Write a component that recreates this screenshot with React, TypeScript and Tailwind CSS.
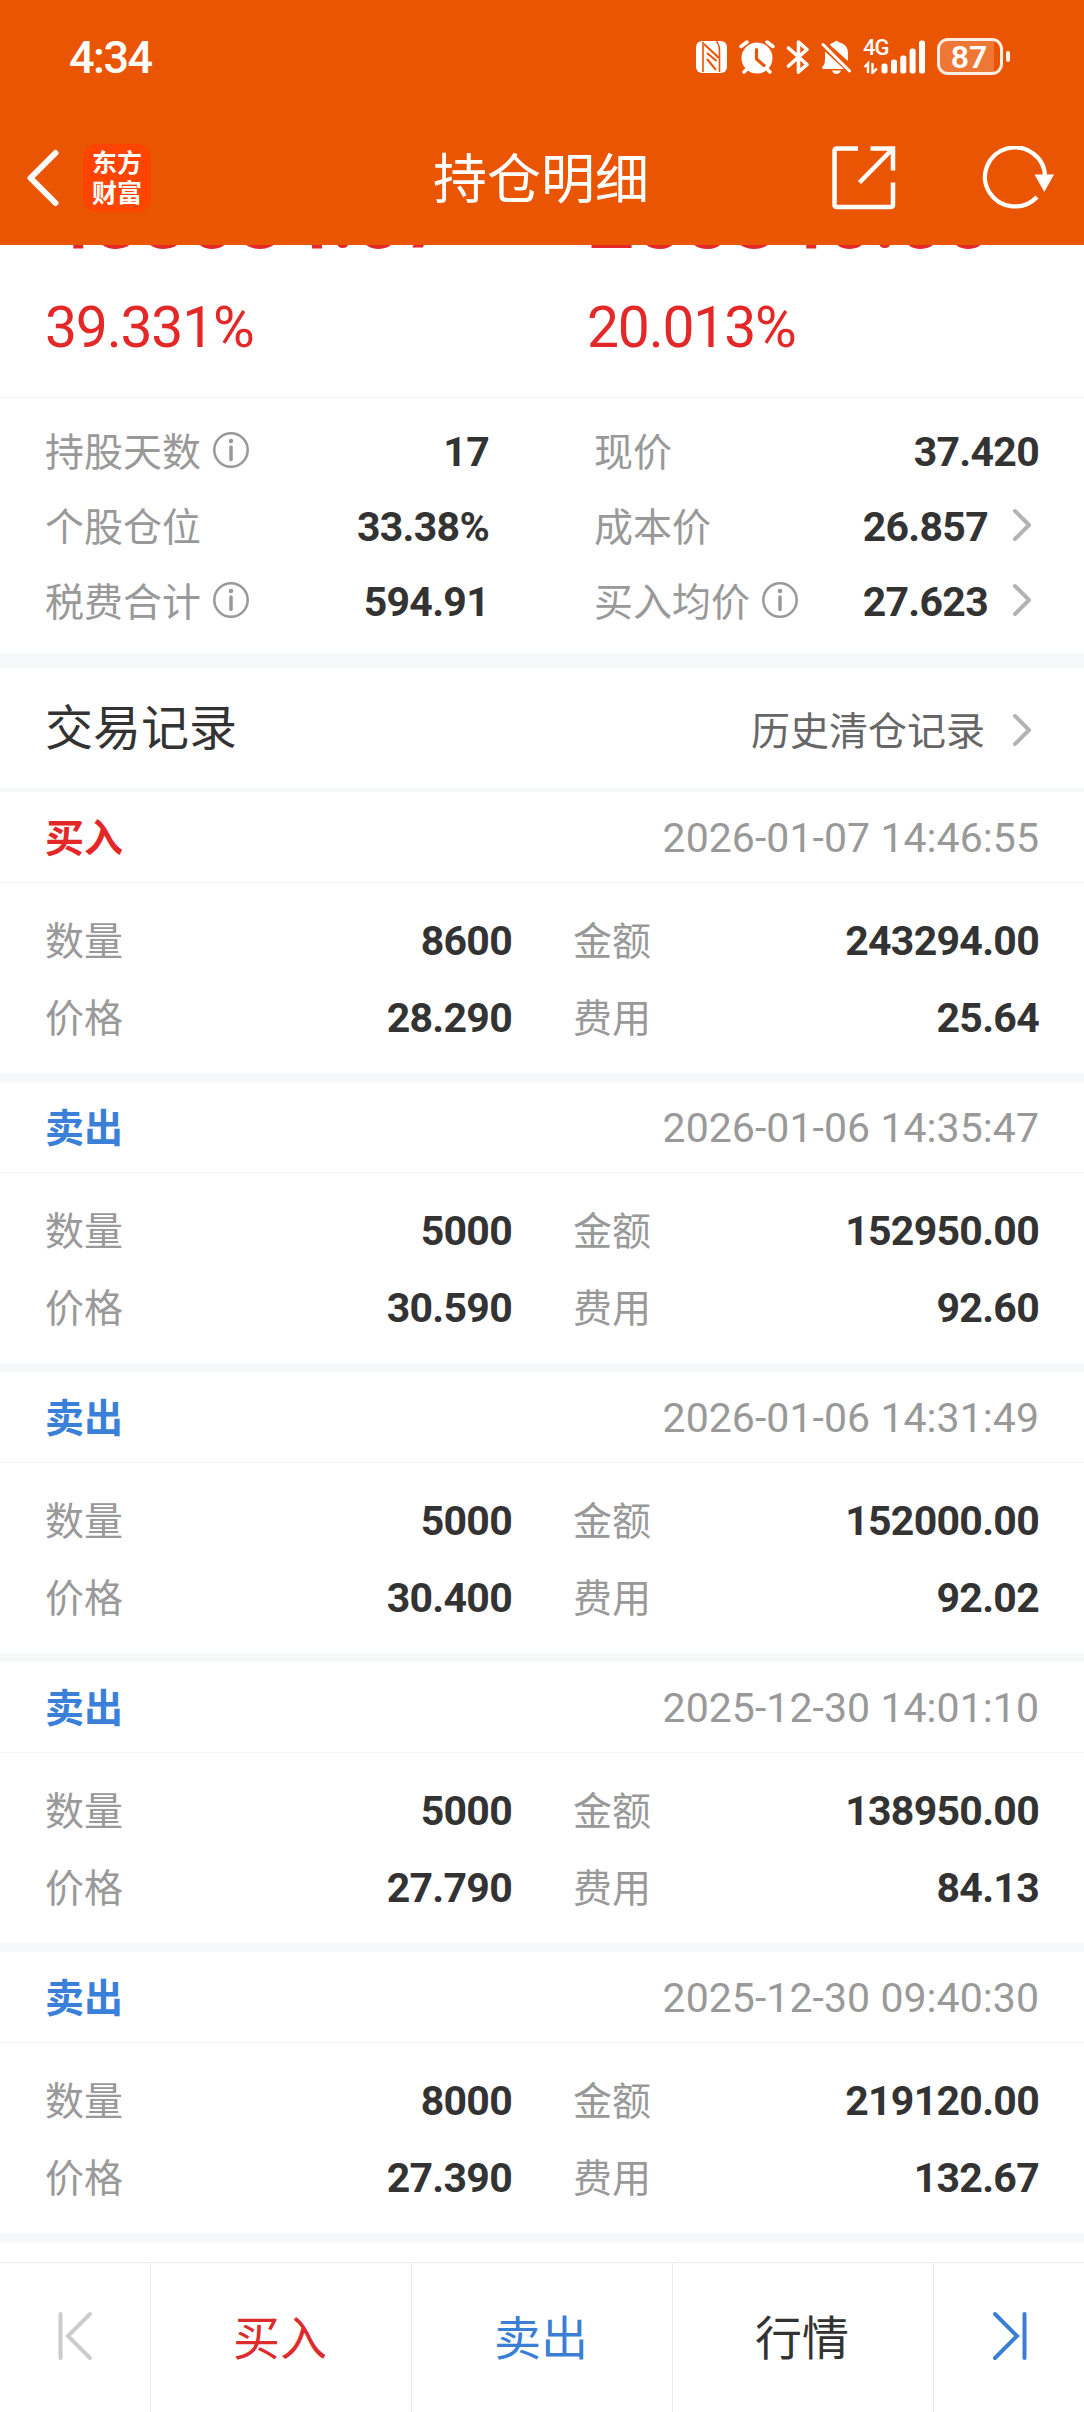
import React from "react";
import { clsx } from "clsx";

interface TradeRecord {
  side: "buy" | "sell";
  time: string;
  quantity: string;
  amount: string;
  price: string;
  fee: string;
}

const records: TradeRecord[] = [
  { side: "buy", time: "2026-01-07 14:46:55", quantity: "8600", amount: "243294.00", price: "28.290", fee: "25.64" },
  { side: "sell", time: "2026-01-06 14:35:47", quantity: "5000", amount: "152950.00", price: "30.590", fee: "92.60" },
  { side: "sell", time: "2026-01-06 14:31:49", quantity: "5000", amount: "152000.00", price: "30.400", fee: "92.02" },
  { side: "sell", time: "2025-12-30 14:01:10", quantity: "5000", amount: "138950.00", price: "27.790", fee: "84.13" },
  { side: "sell", time: "2025-12-30 09:40:30", quantity: "8000", amount: "219120.00", price: "27.390", fee: "132.67" },
];

function StatusBar() {
  return (
    <div className="flex h-[113px] items-center justify-between pl-[69px] pr-[74px] text-white">
      <span className="pt-0.5 font-['Roboto'] text-[45px] font-medium leading-none tracking-[-1.5px]">4:34</span>
      <div className="flex items-center">
        {/* NFC */}
        <svg className="mr-3 h-8 w-[31px]" viewBox="0 0 31 32" fill="none">
          <rect width="31" height="32" rx="6" fill="white" />
          <path d="M7 1V31M20.500 0Q23.500 4 23.500 10V31" stroke="#ea5504" strokeWidth="1.6" />
          <path d="M8 3L23 17M11 12L20.500 20M11 18L20 29" stroke="#ea5504" strokeWidth="2" />
        </svg>
        {/* alarm */}
        <svg className="mr-[11px] h-[34px] w-9" viewBox="0 0 36 34" fill="none">
          <circle cx="18" cy="18" r="15.500" fill="white" />
          <path d="M2 6.500L8 2M34 6.500L28 2M8 29L5 32M28 29L31 32" stroke="white" strokeWidth="3.500" strokeLinecap="round" />
          <path d="M17.500 9.500V19L25 25.500" stroke="#ea5504" strokeWidth="3.200" strokeLinecap="round" />
        </svg>
        {/* bluetooth */}
        <svg className="mr-[11px] h-[34px] w-6" viewBox="0 0 24 34" fill="none">
          <path d="M2.500 8L21 24.500L12.500 32V2L21 9.500L2.500 26" stroke="white" strokeWidth="3.600" strokeLinecap="round" strokeLinejoin="round" />
        </svg>
        {/* muted bell */}
        <svg className="mr-3 h-[34px] w-[30px]" viewBox="0 0 30 34" fill="none">
          <path d="M9 4.500Q11 2.500 13 2.300Q15.500 -1 18 2.300Q27 4.500 27 13V21L9 5Z" fill="white" />
          <path d="M4 11.500L23 29H2Q0 27 3 25Q4 23 4 18Z" fill="white" />
          <path d="M11 30.500H20Q18.500 34 15.500 34Q12.500 34 11 30.500Z" fill="white" />
          <path d="M2 4.500L28.500 31" stroke="white" strokeWidth="3" strokeLinecap="round" />
        </svg>
        {/* signal */}
        <div className="relative mr-3 h-[34px] w-[62px]">
          <span className="absolute -top-px left-0 font-['Roboto'] text-[22px] font-medium leading-[17px] tracking-[-1px]">4G</span>
          <svg className="h-full w-full" viewBox="0 0 62 34" fill="white">
            <rect x="18.500" y="23.500" width="6" height="10" rx="2.500" />
            <rect x="28" y="19.500" width="6" height="14" rx="2.500" />
            <rect x="37.300" y="15.500" width="6" height="18" rx="2.500" />
            <rect x="46.600" y="8.500" width="6" height="25" rx="2.500" />
            <rect x="56" y="0.500" width="6" height="33" rx="2.500" />
            <path d="M1.500 27L5 23.500V33M9.500 23V33L14 28.500" stroke="white" strokeWidth="2.400" fill="none" />
          </svg>
        </div>
        {/* battery */}
        <div className="flex items-center">
          <div className="relative flex h-[37px] w-[66px] items-center justify-center rounded-[11px] border-[3px] border-white/90">
            <div className="absolute inset-y-0 left-0 w-[54px] rounded-l-[8px] bg-white/20" />
            <span className="relative right-px font-['Roboto'] text-[32px] font-semibold leading-none">87</span>
          </div>
          <div className="ml-[3px] h-[11px] w-1 rounded-[2px] bg-white/90" />
        </div>
      </div>
    </div>
  );
}

function TitleBar() {
  return (
    <div className="flex h-[132px] items-center pb-[3px] pl-[26px] pr-[28px] text-white">
      <div className="flex flex-1 items-center">
        <svg className="h-[58px] w-[34px]" viewBox="0 0 34 58" fill="none">
          <path d="M29.500 4L4.500 29L29.500 54" stroke="white" strokeWidth="6" strokeLinecap="round" strokeLinejoin="round" />
        </svg>
        <div className="ml-[23px] flex h-[68px] w-[68px] items-center justify-center rounded-[14px] bg-[#ff4400]">
          <span className="w-[50px] break-all pb-1 text-[25px] font-bold leading-[30px]">东方财富</span>
        </div>
      </div>
      <h1 className="pb-[3px] text-[54px] leading-none">持仓明细</h1>
      <div className="flex flex-1 items-center justify-end">
        <svg className="mr-[86px] h-16 w-16" viewBox="0 0 64 64" fill="none" stroke="white" strokeWidth="4.500">
          <path d="M26 2.500H5Q2.500 2.500 2.500 5V58.500Q2.500 61 5 61H58.500Q61 61 61 58.500V36.500" />
          <path d="M38.500 2.500H61V24.500M60 3.500L27.500 36.500" />
        </svg>
        <svg className="h-16 w-[74px]" viewBox="0 0 74 64" fill="none">
          <path d="M63 31A30 29.500 0 1 0 55 51" stroke="white" strokeWidth="4.200" />
          <path d="M52.500 28.500H72L62.300 46Z" fill="white" />
        </svg>
      </div>
    </div>
  );
}

function InfoIcon() {
  return (
    <svg className="mb-[3px] ml-3 h-9 w-9" viewBox="0 0 36 36" fill="none">
      <circle cx="18" cy="18" r="16.700" stroke="#999999" strokeWidth="2.500" />
      <circle cx="18" cy="9" r="2.300" fill="#999999" />
      <path d="M18 15V27.500" stroke="#999999" strokeWidth="3.500" strokeLinecap="round" />
    </svg>
  );
}

function ChevronIcon({ className }: { className?: string }) {
  return (
    <svg className={clsx("h-[34px] w-5", className)} viewBox="0 0 20 34" fill="none">
      <path d="M3 3L17 17L3 31" stroke="#b3b3b3" strokeWidth="4" strokeLinecap="round" strokeLinejoin="round" />
    </svg>
  );
}

function FieldLabel({ children }: { children: React.ReactNode }) {
  return <span className="pb-[5px] text-[39px] leading-none text-[#999999]">{children}</span>;
}

function FieldValue({ children }: { children: React.ReactNode }) {
  return (
    <span className="-mr-px ml-auto pt-px font-['Roboto'] text-[41px] font-bold leading-none tracking-[-0.7px] text-[#333333]">
      {children}
    </span>
  );
}

interface StatRowProps {
  label: string;
  value: string;
  info?: boolean;
  link?: boolean;
}

function StatRow({ label, value, info, link }: StatRowProps) {
  return (
    <div className="flex h-[75px] items-center">
      <FieldLabel>{label}</FieldLabel>
      {info && <InfoIcon />}
      <FieldValue>{value}</FieldValue>
      {link && <ChevronIcon className="mb-[3px] ml-[25px] mr-[6px]" />}
    </div>
  );
}

function RecordField({ label, value }: { label: string; value: string }) {
  return (
    <div className="flex h-[77px] items-center">
      <FieldLabel>{label}</FieldLabel>
      <FieldValue>{value}</FieldValue>
    </div>
  );
}

function RecordCard({ record }: { record: TradeRecord }) {
  const isBuy = record.side === "buy";
  return (
    <div className="h-[290px] border-b-[9px] border-[#f7f8fa]">
      <div className="flex h-[91px] items-center justify-between border-b border-[#f5f5f5] pl-[45px] pr-[45px]">
        <span className={clsx("pb-[3px] text-[39px] font-bold leading-none", isBuy ? "text-[#e42828]" : "text-[#3a80d9]")}>
          {isBuy ? "买入" : "卖出"}
        </span>
        <span className="pt-0.5 font-['Roboto'] text-[41px] leading-none tracking-[0.06px] text-[#999999]">{record.time}</span>
      </div>
      <div className="grid grid-cols-[466px_465px] gap-x-[62px] pl-[45px] pt-[19px]">
        <RecordField label="数量" value={record.quantity} />
        <RecordField label="金额" value={record.amount} />
        <RecordField label="价格" value={record.price} />
        <RecordField label="费用" value={record.fee} />
      </div>
    </div>
  );
}

function BottomBar() {
  return (
    <nav className="grid h-[150px] grid-cols-[151px_261px_261px_261px_150px] divide-x divide-[#ebebeb] border-t border-[#ebebeb] bg-white text-[47px] leading-none">
      <button className="flex items-center justify-center pb-1">
        <svg className="h-[50px] w-[36px]" viewBox="0 0 36 50" fill="none" stroke="#cccccc" strokeWidth="4" strokeLinecap="round">
          <path d="M3.500 3V47M33 3L11 25L33 47" />
        </svg>
      </button>
      <button className="flex items-center justify-center pb-[7px] pr-0.5 text-[#dc2c2c]">买入</button>
      <button className="flex items-center justify-center pb-[7px] pr-0.5 text-[#3b7fd4]">卖出</button>
      <button className="flex items-center justify-center pb-[7px] pr-0.5 text-[#333333]">行情</button>
      <button className="flex items-center justify-center pb-1 pl-0.5">
        <svg className="h-[50px] w-[36px]" viewBox="0 0 36 50" fill="none" stroke="#3b7fd4" strokeWidth="4" strokeLinecap="round">
          <path d="M32.500 3V47M3 3L25 25L3 47" />
        </svg>
      </button>
    </nav>
  );
}

export default function App() {
  return (
    <div className="flex h-[2412px] w-[1084px] flex-col overflow-hidden bg-white font-['Noto_Sans_CJK_SC',sans-serif]">
      <header className="bg-[#ea5504]">
        <StatusBar />
        <TitleBar />
      </header>

      <main className="flex-1 overflow-hidden">
        {/* profit summary, scrolled partly under the header */}
        <section className="grid h-[153px] grid-cols-[542px_542px] content-end overflow-hidden border-b border-[#f5f5f5] pb-[41px] font-['Roboto'] leading-none text-[#e42828]">
          <div className="pl-[45px]">
            <div className="text-[84px] font-medium leading-[84px]">433084.07</div>
            <div className="mt-[37px] text-[57px] tracking-[-1.2px]">39.331%</div>
          </div>
          <div className="pl-[45px]">
            <div className="text-[84px] font-medium leading-[84px]">255840.00</div>
            <div className="mt-[37px] text-[57px] tracking-[-1.2px]">20.013%</div>
          </div>
        </section>

        <section className="grid h-[255px] grid-cols-[443px_444px] gap-x-[106px] pl-[45px] pt-4">
          <div>
            <StatRow label="持股天数" value="17" info />
            <StatRow label="个股仓位" value="33.38%" />
            <StatRow label="税费合计" value="594.91" info />
          </div>
          <div>
            <StatRow label="现价" value="37.420" />
            <StatRow label="成本价" value="26.857" link />
            <StatRow label="买入均价" value="27.623" info link />
          </div>
        </section>

        <div className="h-[15px] bg-[#f7f8fa]" />

        <section>
          <div className="flex h-[124px] items-center justify-between border-b-4 border-[#f7f8f9] pl-[45px] pr-[52px]">
            <h2 className="pb-2 text-[48px] leading-none text-[#333333]">交易记录</h2>
            <div className="flex items-center pt-1">
              <span className="pb-[3px] text-[39px] leading-none text-[#666666]">历史清仓记录</span>
              <ChevronIcon className="ml-[27px]" />
            </div>
          </div>
          {records.map((record) => (
            <RecordCard key={record.time} record={record} />
          ))}
        </section>
      </main>

      <BottomBar />
    </div>
  );
}
